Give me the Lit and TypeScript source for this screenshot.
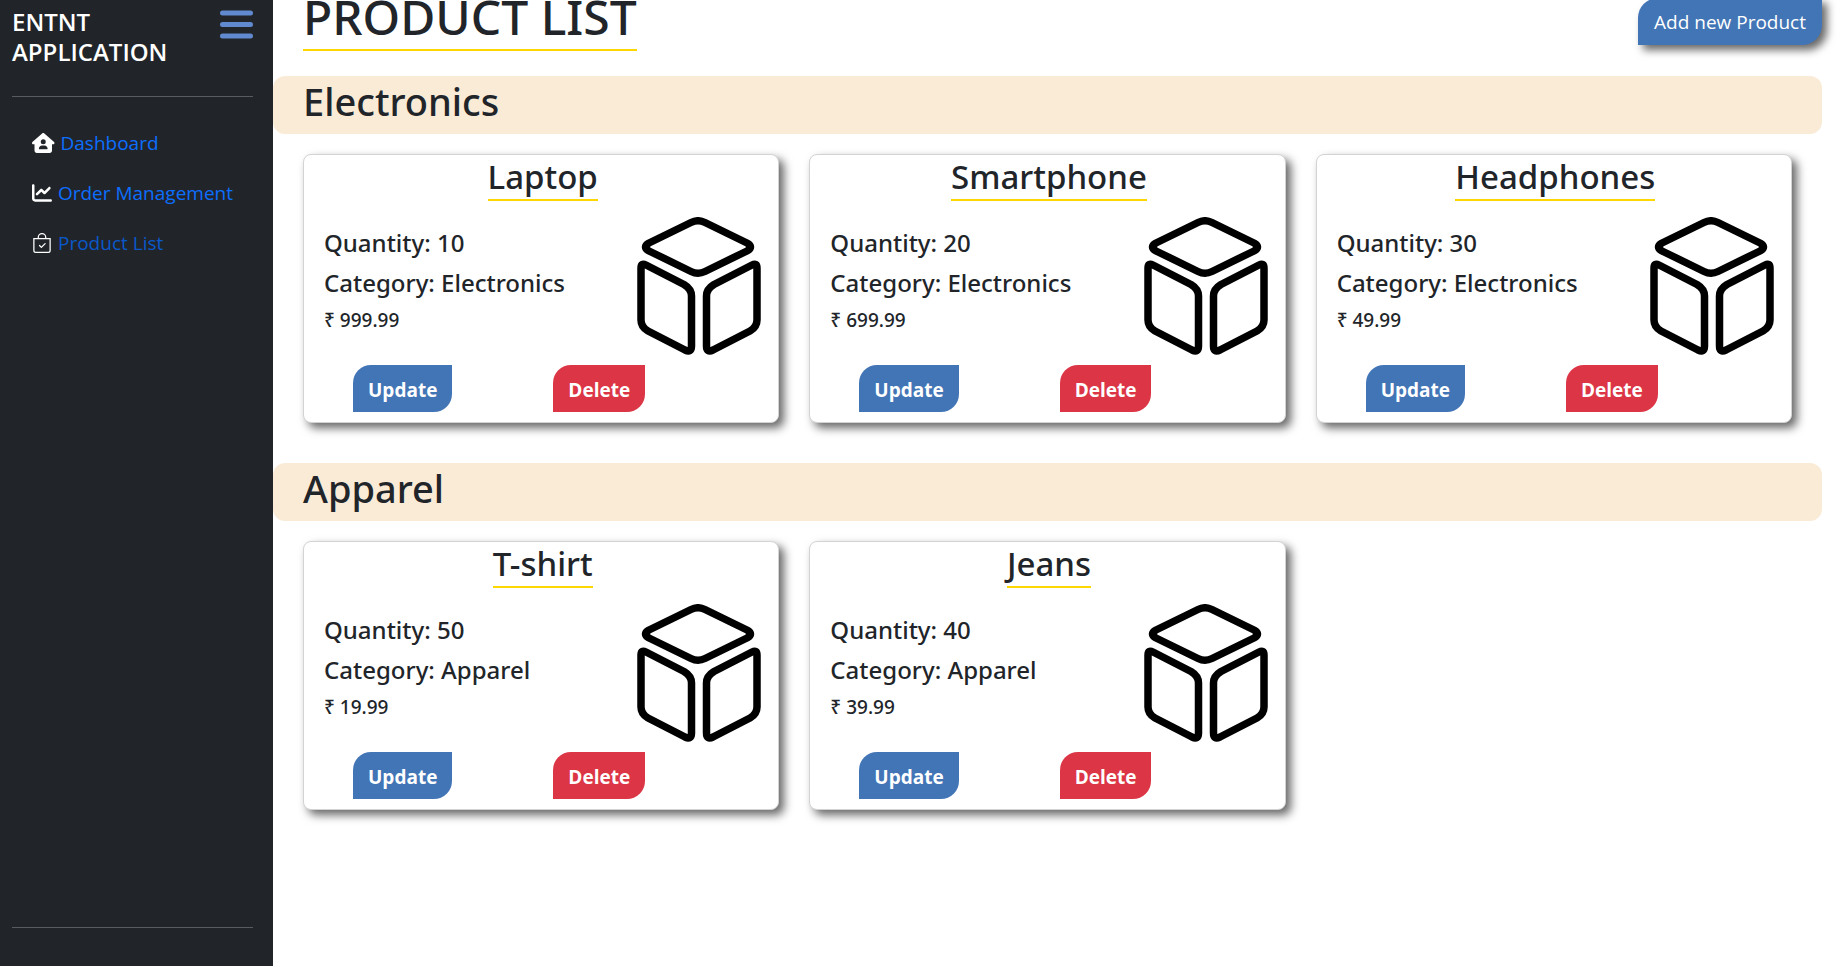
import { LitElement, html, css, svg } from "lit";
import { customElement, property } from "lit/decorators.js";

interface Product {
  name: string;
  quantity: number;
  category: string;
  price: string;
}

const PRODUCTS: Product[] = [
  { name: "Laptop", quantity: 10, category: "Electronics", price: "999.99" },
  { name: "Smartphone", quantity: 20, category: "Electronics", price: "699.99" },
  { name: "Headphones", quantity: 30, category: "Electronics", price: "49.99" },
  { name: "T-shirt", quantity: 50, category: "Apparel", price: "19.99" },
  { name: "Jeans", quantity: 40, category: "Apparel", price: "39.99" },
];

const CATEGORIES = ["Electronics", "Apparel"];

const houseIcon = svg`<path d="M575.8 255.5c0 18-15 32.1-32 32.1h-32l.7 160.2c.2 35.5-28.5 64.3-64 64.3H128.1c-35.3 0-64-28.7-64-64V287.6H32c-18 0-32-14-32-32.1c0-9 3-17 10-24L266.4 8c7-7 15-8 22-8s15 2 21 7L564.8 231.5c8 7 12 15 11 24zM352 224a64 64 0 1 0 -128 0 64 64 0 1 0 128 0zm-96 96c-44.2 0-80 35.8-80 80c0 8.8 7.2 16 16 16H384c8.8 0 16-7.2 16-16c0-44.2-35.8-80-80-80H256z"/>`;
const chartIcon = svg`<path d="M64 64c0-17.7-14.3-32-32-32S0 46.3 0 64V400c0 44.2 35.8 80 80 80H480c17.7 0 32-14.3 32-32s-14.3-32-32-32H80c-8.8 0-16-7.2-16-16V64zm406.6 86.6c12.5-12.5 12.5-32.8 0-45.3s-32.8-12.5-45.3 0L320 210.7l-57.4-57.4c-12.5-12.5-32.8-12.5-45.3 0l-112 112c-12.5 12.5-12.5 32.8 0 45.3s32.8 12.5 45.3 0L240 221.3l57.4 57.4c12.5 12.5 32.8 12.5 45.3 0l128-128z"/>`;
const bagIcon = svg`<path fill-rule="evenodd" d="M10.854 8.146a.5.5 0 0 1 0 .708l-3 3a.5.5 0 0 1-.708 0l-1.5-1.5a.5.5 0 1 1 .708-.708L7.5 10.793l2.646-2.647a.5.5 0 0 1 .708 0"/><path d="M8 1a2.5 2.5 0 0 1 2.5 2.5V4h-5v-.5A2.5 2.5 0 0 1 8 1m3.5 3v-.5a3.5 3.5 0 1 0-7 0V4H1v10a2 2 0 0 0 2 2h10a2 2 0 0 0 2-2V4zM2 5h12v9a1 1 0 0 1-1 1H3a1 1 0 0 1-1-1z"/>`;

@customElement("product-card")
export class ProductCard extends LitElement {
  @property({ attribute: false }) product!: Product;

  static styles = css`
    :host {
      display: block;
      font-family: "Noto Sans", "Open Sans", sans-serif;
    }
    .card {
      box-sizing: border-box;
      height: 100%;
      padding: 2px 17px 10px 20px;
      border: 1px solid #d3d3d3;
      border-radius: 8px;
      background: #fff;
      box-shadow: 5px 5px 10px rgba(0, 0, 0, 0.6);
    }
    .name {
      width: fit-content;
      margin: 0 auto;
      padding-bottom: 2px;
      border-bottom: 2px solid #ffd700;
      font-size: 33px;
      font-weight: 500;
      line-height: 40px;
    }
    .body {
      display: flex;
      justify-content: space-between;
      align-items: flex-start;
      padding-top: 16px;
    }
    .facts {
      display: flex;
      flex-direction: column;
      gap: 10px;
      padding-top: 11px;
    }
    .fact,
    .price {
      margin: 0;
      font-weight: 500;
    }
    .fact {
      font-size: 24px;
      line-height: 30px;
    }
    .price {
      font-size: 19px;
      line-height: 24px;
    }
    .cube {
      width: 124px;
      height: 138px;
      flex: none;
      fill: none;
      stroke: #000;
      stroke-width: 7.5;
      stroke-linejoin: round;
    }
    .actions {
      display: flex;
      gap: 101px;
      padding: 10px 29px 0;
    }
    .action {
      padding: 11px 15px 8px;
      border: 0;
      border-radius: 18px 0;
      color: #fff;
      font-family: "Open Sans", "Noto Sans", sans-serif;
      font-size: 19px;
      font-weight: 700;
      line-height: 28px;
      cursor: pointer;
    }
    .update {
      background: #4275b6;
    }
    .delete {
      background: #dc3545;
    }
  `;

  render() {
    const p = this.product;
    return html`
      <article class="card">
        <h3 class="name">${p.name}</h3>
        <div class="body">
          <div class="facts">
            <h5 class="fact">Quantity: ${p.quantity}</h5>
            <h5 class="fact">Category: ${p.category}</h5>
            <h6 class="price">₹ ${p.price}</h6>
          </div>
          <svg class="cube" viewBox="0 0 124 138" aria-hidden="true">
            <path d="M54 5.500Q61 2 68 5.500L110 26Q117 30 110 34L68 54.500Q61 58 54 54.500L12 34Q5 30 12 26Z" />
            <path d="M4 51Q4 45.500 9 48L47 67.500Q54.500 72 54.500 79V129Q54.500 136 48 133L11 114Q4 110 4 103Z" />
            <path d="M120 51Q120 45.500 115 48L77 67.500Q69.500 72 69.500 79V129Q69.500 136 76 133L113 114Q120 110 120 103Z" />
          </svg>
        </div>
        <div class="actions">
          <button class="action update" type="button">Update</button>
          <button class="action delete" type="button">Delete</button>
        </div>
      </article>
    `;
  }
}

@customElement("app-root")
export class AppRoot extends LitElement {
  static styles = css`
    :host {
      display: flex;
      height: 100vh;
      overflow: hidden;
      background: #fff;
      color: #212529;
      font-family: "Open Sans", "Noto Sans", sans-serif;
      font-size: 19px;
      line-height: 30px;
    }
    .sidebar {
      box-sizing: border-box;
      flex: none;
      display: flex;
      flex-direction: column;
      width: 273px;
      padding: 7px 20px 38px 12px;
      background: #212529;
    }
    .brand {
      display: flex;
      justify-content: space-between;
      align-items: flex-start;
      padding-bottom: 29px;
      border-bottom: 1px solid #585c5f;
    }
    .brand-name {
      margin: 0;
      color: #fff;
      font-size: 24px;
      font-weight: 600;
      line-height: 30px;
    }
    .toggle {
      display: flex;
      padding: 3px 0;
      border: 0;
      background: none;
      cursor: pointer;
    }
    .bars {
      width: 33px;
      height: 29px;
      stroke: #6189cf;
      stroke-width: 5;
      stroke-linecap: round;
    }
    .nav {
      flex: 1;
      display: flex;
      flex-direction: column;
      gap: 20px;
      padding: 31px 20px;
      border-bottom: 1px solid #585c5f;
    }
    .link {
      display: flex;
      align-items: center;
      gap: 6px;
      color: #0d6efd;
      text-decoration: none;
      white-space: nowrap;
    }
    .current {
      color: #0a58ca;
    }
    .icon {
      height: 20px;
      fill: #fff;
    }
    .main {
      flex: 1;
      min-width: 0;
      padding-right: 25px;
    }
    .header {
      display: flex;
      justify-content: space-between;
      align-items: flex-start;
      margin-top: -13px;
      padding-left: 30px;
    }
    .title {
      margin: 0;
      padding-bottom: 2px;
      border-bottom: 2px solid #ffd700;
      font-family: "Noto Sans", "Open Sans", sans-serif;
      font-size: 48px;
      font-weight: 500;
      line-height: 60px;
    }
    .add {
      margin-top: 11px;
      padding: 9px 16px 8px;
      border: 0;
      border-radius: 20px 0;
      background: #4275b6;
      box-shadow: 5px 5px 8px rgba(0, 0, 0, 0.6);
      color: #fff;
      font-family: inherit;
      font-size: 19px;
      line-height: 30px;
      cursor: pointer;
    }
    .section {
      padding-top: 25px;
    }
    .section + .section {
      padding-top: 40px;
    }
    .category {
      margin: 0;
      padding: 0 30px 8px;
      border-radius: 12px;
      background: #faebd7;
      font-family: "Noto Sans", "Open Sans", sans-serif;
      font-size: 38px;
      font-weight: 500;
      line-height: 50px;
    }
    .cards {
      display: grid;
      grid-template-columns: repeat(3, minmax(0, 1fr));
      gap: 30px;
      padding: 20px 30px 0;
    }
  `;

  render() {
    return html`
      <aside class="sidebar">
        <div class="brand">
          <h5 class="brand-name">ENTNT<br />APPLICATION</h5>
          <button class="toggle" type="button" aria-label="Toggle menu">
            <svg class="bars" viewBox="0 0 33 29" aria-hidden="true">
              <path d="M2.500 3H30.500M2.500 14.500H30.500M2.500 26H30.500" />
            </svg>
          </button>
        </div>
        <nav class="nav">
          <a class="link" href="#dashboard">
            <svg class="icon" viewBox="0 0 576 512" aria-hidden="true">${houseIcon}</svg>
            Dashboard
          </a>
          <a class="link" href="#orders">
            <svg class="icon" viewBox="0 0 512 512" aria-hidden="true">${chartIcon}</svg>
            Order Management
          </a>
          <a class="link current" href="#products" aria-current="page">
            <svg class="icon" viewBox="0 0 16 16" aria-hidden="true">${bagIcon}</svg>
            Product List
          </a>
        </nav>
      </aside>
      <main class="main">
        <header class="header">
          <h1 class="title">PRODUCT LIST</h1>
          <button class="add" type="button">Add new Product</button>
        </header>
        ${CATEGORIES.map(
          (category) => html`
            <section class="section">
              <h2 class="category">${category}</h2>
              <div class="cards">
                ${PRODUCTS.filter((p) => p.category === category).map(
                  (p) => html`<product-card .product=${p}></product-card>`
                )}
              </div>
            </section>
          `
        )}
      </main>
    `;
  }
}
